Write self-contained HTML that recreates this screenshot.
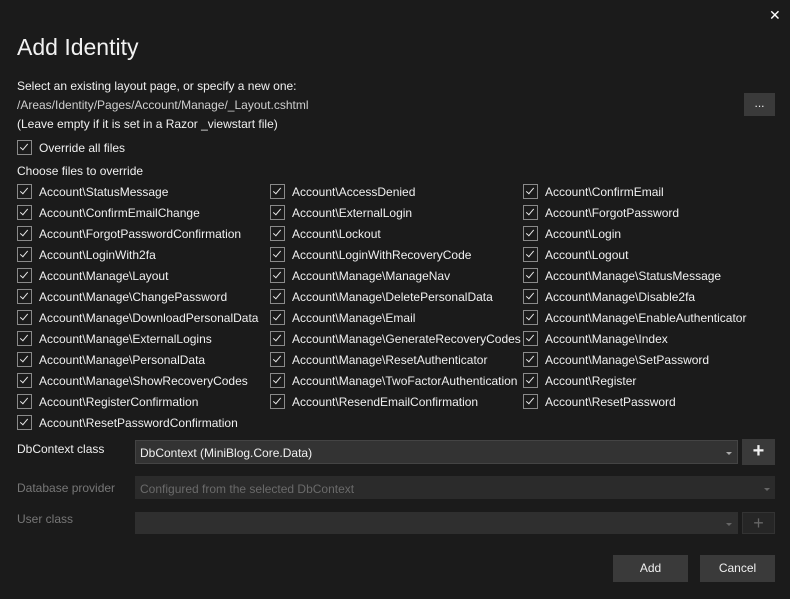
<!DOCTYPE html><html><head><style>
body{margin:0;width:790px;height:599px;background:#1b1b1b;color:#f0f0f0;font-family:"Liberation Sans",sans-serif;font-size:12px;position:relative;overflow:hidden}
.a{position:absolute;white-space:nowrap}
.cb{position:absolute;width:13px;height:13px;border:1px solid #8a8a8a;background:#1b1b1b}
.cb:after{content:"";position:absolute;left:4px;top:1px;width:3px;height:7px;border:solid #e8e8e8;border-width:0 1.5px 1.5px 0;transform:rotate(40deg)}
.box{position:absolute;background:#333;border:1px solid #444;box-sizing:border-box}
.btn{position:absolute;background:#3a3a3a;color:#f0f0f0;text-align:center;box-sizing:border-box}
.arr{position:absolute;width:0;height:0;border-left:3px solid transparent;border-right:3px solid transparent;border-top:3px solid #aaa}
</style></head><body>
<div class="a" style="left:769px;top:7px;font-size:14px;color:#fff">✕</div>
<div class="a" style="left:17px;top:34px;font-size:23px;color:#f2f2f2">Add Identity</div>
<div class="a" style="left:17px;top:79px">Select an existing layout page, or specify a new one:</div>
<div class="a" style="left:17px;top:98px;color:#cfcfcf">/Areas/Identity/Pages/Account/Manage/_Layout.cshtml</div>
<div class="a" style="left:17px;top:117px">(Leave empty if it is set in a Razor _viewstart file)</div>
<div class="btn" style="left:744px;top:93px;width:31px;height:23px;line-height:20px">...</div>
<div class="cb" style="left:17px;top:140px"></div><div class="a" style="left:39px;top:141px">Override all files</div>
<div class="a" style="left:17px;top:164px">Choose files to override</div>
<div id="g"></div>
<div class="a" style="left:17px;top:442px">DbContext class</div>
<div class="box" style="left:135px;top:440px;width:603px;height:24px"><span class="a" style="left:4px;top:5px">DbContext (MiniBlog.Core.Data)</span><div class="arr" style="right:5px;top:11px"></div></div>
<div class="btn" style="left:742px;top:439px;width:33px;height:26px;line-height:24px;font-size:20px;font-weight:bold">+</div>
<div class="a" style="left:17px;top:481px;color:#777">Database provider</div>
<div class="box" style="left:135px;top:476px;width:640px;height:23px;background:#2b2b2b;border-color:#2b2b2b"><span class="a" style="left:4px;top:5px;color:#6a6a6a">Configured from the selected DbContext</span><div class="arr" style="right:4px;top:11px;border-top-color:#666"></div></div>
<div class="a" style="left:17px;top:512px;color:#777">User class</div>
<div class="box" style="left:135px;top:512px;width:603px;height:22px;background:#2f2f2f;border-color:#2f2f2f"><div class="arr" style="right:5px;top:10px;border-top-color:#666"></div></div>
<div class="btn" style="left:742px;top:512px;width:33px;height:22px;line-height:20px;font-size:18px;color:#666;background:#262626;border:1px solid #333">+</div>
<div class="btn" style="left:613px;top:555px;width:75px;height:27px;line-height:27px">Add</div>
<div class="btn" style="left:700px;top:555px;width:75px;height:27px;line-height:27px">Cancel</div>
<script>
var c=[["Account\\StatusMessage","Account\\ConfirmEmailChange","Account\\ForgotPasswordConfirmation","Account\\LoginWith2fa","Account\\Manage\\Layout","Account\\Manage\\ChangePassword","Account\\Manage\\DownloadPersonalData","Account\\Manage\\ExternalLogins","Account\\Manage\\PersonalData","Account\\Manage\\ShowRecoveryCodes","Account\\RegisterConfirmation","Account\\ResetPasswordConfirmation"],
["Account\\AccessDenied","Account\\ExternalLogin","Account\\Lockout","Account\\LoginWithRecoveryCode","Account\\Manage\\ManageNav","Account\\Manage\\DeletePersonalData","Account\\Manage\\Email","Account\\Manage\\GenerateRecoveryCodes","Account\\Manage\\ResetAuthenticator","Account\\Manage\\TwoFactorAuthentication","Account\\ResendEmailConfirmation"],
["Account\\ConfirmEmail","Account\\ForgotPassword","Account\\Login","Account\\Logout","Account\\Manage\\StatusMessage","Account\\Manage\\Disable2fa","Account\\Manage\\EnableAuthenticator","Account\\Manage\\Index","Account\\Manage\\SetPassword","Account\\Register","Account\\ResetPassword"]];
var x=[17,270,523],h="";
c.forEach(function(col,i){col.forEach(function(t,j){var y=184+j*21;h+='<div class="cb" style="left:'+x[i]+'px;top:'+y+'px"></div><div class="a" style="left:'+(x[i]+22)+'px;top:'+(y+1)+'px">'+t+'</div>';});});
document.getElementById("g").innerHTML=h;
</script>
</body></html>
